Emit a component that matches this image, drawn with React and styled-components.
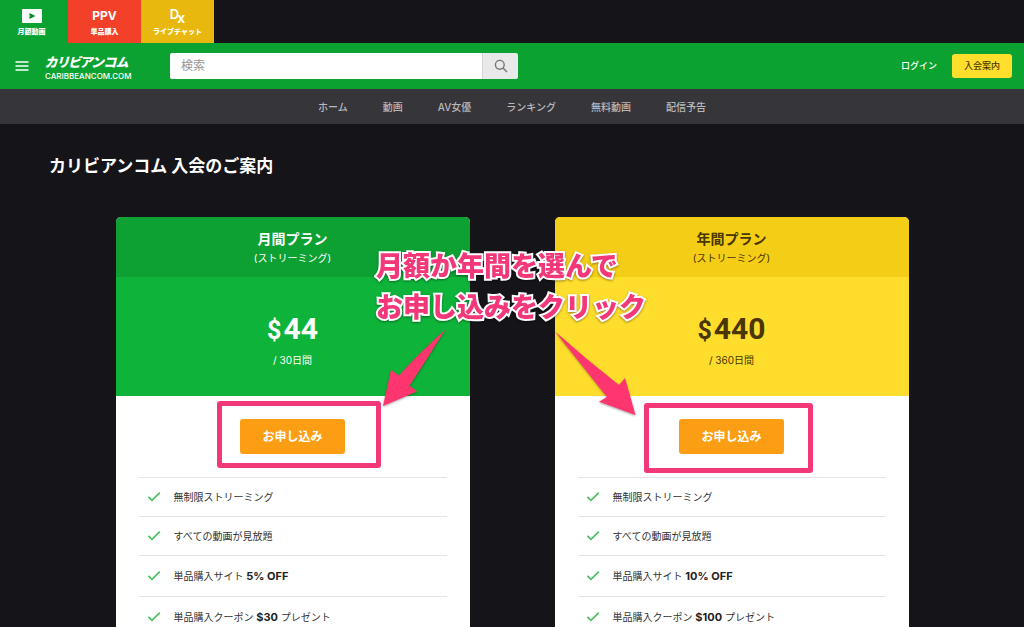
import React from "react";
import styled, { createGlobalStyle, css } from "styled-components";

const GlobalStyle = createGlobalStyle`
  *, *::before, *::after { box-sizing: border-box; }
  html { scrollbar-width: none; background: #141419; }
  body {
    margin: 0;
    background: #141419;
    color: #fff;
    font-family: Inter, "Noto Sans CJK JP", sans-serif;
    font-size: 10px;
    line-height: 16px;
  }
  h1, h2, p, ul { margin: 0; padding: 0; }
  a { color: inherit; text-decoration: none; }
  button, input { font: inherit; }
`;

const Page = styled.div`
  min-height: 100vh;
  overflow: hidden;
`;

const SiteTabs = styled.nav`
  display: flex;
  height: 43px;
`;

const SiteTab = styled.a`
  display: flex;
  flex-direction: column;
  align-items: center;
  width: ${(p) => p.$width || 73}px;
  padding: ${(p) => (p.$width ? "7px 5px 0 0" : "7px 0 0")};
  background: ${(p) => p.$color};
  font-size: 7px;
  font-weight: 900;
`;

const TabMark = styled.span`
  display: flex;
  align-items: center;
  justify-content: center;
  height: 17px;
  font-size: 12px;
  font-weight: 700;
`;

const DxMark = styled(TabMark)`
  align-items: flex-start;
  font-size: 13px;
  line-height: 15px;
  font-weight: 600;
  small {
    margin-left: -2px;
    padding-top: 3px;
    font-size: 14px;
  }
`;

const Header = styled.header`
  display: flex;
  align-items: center;
  height: 46px;
  padding: 0 12px 0 15px;
  background: #0ba232;
`;

const MenuButton = styled.button`
  display: flex;
  padding: 0;
  border: 0;
  background: none;
  color: #fff;
  cursor: pointer;
`;

const Logo = styled.a`
  display: flex;
  flex-direction: column;
  width: 125px;
  margin-left: 16px;
  white-space: nowrap;
`;

const LogoName = styled.span`
  font-family: "Noto Sans CJK JP", sans-serif;
  font-size: 13px;
  line-height: 20px;
  font-weight: 900;
  font-style: italic;
  font-feature-settings: "palt";
`;

const LogoDomain = styled.span`
  font-size: 8px;
  line-height: 8px;
  font-weight: 500;
`;

const Search = styled.form`
  display: flex;
  flex: 0 1 348px;
  height: 26px;
  border-radius: 2px;
  overflow: hidden;
`;

const SearchInput = styled.input`
  flex: 1;
  min-width: 0;
  padding: 0 11px;
  border: 0;
  background: #fff;
  color: #333;
  font-size: 12px;
  &::placeholder { color: #969696; }
`;

const SearchButton = styled.button`
  display: flex;
  align-items: center;
  justify-content: center;
  width: 36px;
  padding: 0;
  border: 0;
  border-left: 1px solid #d4d4d4;
  background: #e9e9e9;
  color: #777;
  cursor: pointer;
`;

const Account = styled.div`
  display: flex;
  align-items: center;
  gap: 15px;
  margin-left: auto;
  font-size: 9px;
  font-weight: 500;
`;

const JoinLink = styled.a`
  padding: 4px 12px;
  border-radius: 3px;
  background: #ffdf2c;
  color: #4a3800;
`;

const MainNav = styled.nav`
  display: flex;
  align-items: center;
  justify-content: center;
  gap: 35px;
  height: 35px;
  background: #36353a;
  color: #b9b8bc;
  font-weight: 500;
`;

const Title = styled.h1`
  padding: 30px 49px 0;
  font-size: 17px;
  line-height: 24px;
  font-weight: 700;
`;

const Plans = styled.section`
  position: relative;
  display: grid;
  grid-template-columns: 1fr 1fr;
  gap: 85px;
  max-width: 793px;
  margin: 39px auto 0;
`;

const themes = {
  green: { head: "#0da032", body: "#0db439", text: "#fff" },
  yellow: { head: "#f4cd16", body: "#ffdd2c", text: "#493600" },
};

const Card = styled.article`
  border-radius: 5px 5px 0 0;
  background: #fff;
  color: #333;
`;

const CardHead = styled.header`
  height: 60px;
  padding-top: 12px;
  border-radius: 5px 5px 0 0;
  background: ${(p) => themes[p.$tone].head};
  color: ${(p) => themes[p.$tone].text};
  text-align: center;
`;

const PlanName = styled.h2`
  margin-bottom: 1px;
  font-size: 14px;
  line-height: 20px;
  font-weight: 700;
`;

const PriceArea = styled.div`
  height: 119px;
  padding-top: 34px;
  background: ${(p) => themes[p.$tone].body};
  color: ${(p) => themes[p.$tone].text};
  text-align: center;
`;

const Price = styled.p`
  margin-bottom: 3px;
  font-family: Roboto, sans-serif;
  font-size: 30px;
  line-height: 36px;
  font-weight: 700;
`;

const Currency = styled.span`
  margin-right: 2px;
  font-size: 25px;
`;

const Apply = styled.div`
  position: relative;
  display: flex;
  justify-content: center;
  padding: 23px 0;
`;

const ApplyButton = styled.button`
  width: 105px;
  height: 35px;
  padding: 0;
  border: 0;
  border-radius: 3px;
  background: #fc9e14;
  color: #fff;
  font-size: 12px;
  font-weight: 700;
  cursor: pointer;
`;

const Highlight = styled.span`
  position: absolute;
  border: 5px solid #f23878;
  border-radius: 3px;
  pointer-events: none;
  ${(p) =>
    p.$tone === "green"
      ? css`top: 5px; left: 101px; width: 164px; height: 67px;`
      : css`top: 7px; left: 89px; width: 169px; height: 70px;`}
`;

const Features = styled.ul`
  padding: 0 23px;
  list-style: none;
`;

const Feature = styled.li`
  display: flex;
  align-items: center;
  gap: 13px;
  min-height: ${(p) => (p.$tall ? 41 : 39)}px;
  padding-left: 8px;
  border-top: 1px solid #e4e4e4;
  strong {
    font-size: 11px;
    font-weight: 700;
    color: #222;
  }
`;

const Note = styled.p`
  position: absolute;
  top: 27px;
  left: calc(50% - 136px);
  color: #f23878;
  font-family: "Noto Sans CJK JP", sans-serif;
  font-size: 27px;
  line-height: 41px;
  font-weight: 900;
  white-space: nowrap;
  -webkit-text-stroke: 4px #fff;
  paint-order: stroke fill;
  filter: drop-shadow(0 1px 1px rgba(0, 0, 0, 0.4));
`;

const Arrows = styled.svg`
  position: absolute;
  top: 108px;
  left: calc(50% - 137px);
  filter: drop-shadow(0 1px 1px rgba(0, 0, 0, 0.35));
  pointer-events: none;
`;

const CheckIcon = () => (
  <svg width="14" height="12" viewBox="0 0 14 12" fill="none" stroke="#4cc065" strokeWidth="1.7" aria-hidden="true">
    <path d="M1.4 5.8 5 9.4 12.8 1.6" />
  </svg>
);

const navItems = ["ホーム", "動画", "AV女優", "ランキング", "無料動画", "配信予告"];

const plans = [
  { tone: "green", name: "月間プラン", price: "44", days: "/ 30日間", off: "5% OFF", coupon: "$30" },
  { tone: "yellow", name: "年間プラン", price: "440", days: "/ 360日間", off: "10% OFF", coupon: "$100" },
];

function PlanCard({ plan }) {
  return (
    <Card>
      <CardHead $tone={plan.tone}>
        <PlanName>{plan.name}</PlanName>
        <p>(ストリーミング)</p>
      </CardHead>
      <PriceArea $tone={plan.tone}>
        <Price>
          <Currency>$</Currency>
          {plan.price}
        </Price>
        <p>{plan.days}</p>
      </PriceArea>
      <Apply>
        <ApplyButton type="button">お申し込み</ApplyButton>
        <Highlight $tone={plan.tone} />
      </Apply>
      <Features>
        <Feature><CheckIcon /><span>無制限ストリーミング</span></Feature>
        <Feature><CheckIcon /><span>すべての動画が見放題</span></Feature>
        <Feature $tall><CheckIcon /><span>単品購入サイト <strong>{plan.off}</strong></span></Feature>
        <Feature $tall><CheckIcon /><span>単品購入クーポン <strong>{plan.coupon}</strong> プレゼント</span></Feature>
      </Features>
    </Card>
  );
}

export default function App() {
  return (
    <Page>
      <GlobalStyle />
      <SiteTabs>
        <SiteTab href="#" $color="#0ba232" $width={68}>
          <TabMark>
            <svg width="20" height="14" viewBox="0 0 20 14" aria-hidden="true">
              <rect width="20" height="14" rx="1" fill="#fff" />
              <path d="M7.5 4v6l6-3z" fill="#0a8a2c" />
            </svg>
          </TabMark>
          月額動画
        </SiteTab>
        <SiteTab href="#" $color="#f24128">
          <TabMark>PPV</TabMark>
          単品購入
        </SiteTab>
        <SiteTab href="#" $color="#e8b80f">
          <DxMark>D<small>x</small></DxMark>
          ライブチャット
        </SiteTab>
      </SiteTabs>
      <Header>
        <MenuButton type="button" aria-label="メニュー">
          <svg width="14" height="12" viewBox="0 0 14 12" stroke="currentColor" strokeWidth="1.6" aria-hidden="true">
            <path d="M0.5 2h13M0.5 6h13M0.5 10h13" />
          </svg>
        </MenuButton>
        <Logo href="#">
          <LogoName>カリビアンコム</LogoName>
          <LogoDomain>CARIBBEANCOM.COM</LogoDomain>
        </Logo>
        <Search role="search" onSubmit={(e) => e.preventDefault()}>
          <SearchInput type="text" placeholder="検索" aria-label="検索" />
          <SearchButton type="submit" aria-label="検索">
            <svg width="14" height="14" viewBox="0 0 14 14" fill="none" stroke="currentColor" strokeWidth="1.4" aria-hidden="true">
              <circle cx="5.8" cy="5.8" r="4.4" />
              <path d="m9 9 4 4" />
            </svg>
          </SearchButton>
        </Search>
        <Account>
          <a href="#">ログイン</a>
          <JoinLink href="#">入会案内</JoinLink>
        </Account>
      </Header>
      <MainNav>
        {navItems.map((item) => (
          <a key={item} href="#">{item}</a>
        ))}
      </MainNav>
      <main>
        <Title>カリビアンコム 入会のご案内</Title>
        <Plans>
          {plans.map((plan) => (
            <PlanCard key={plan.tone} plan={plan} />
          ))}
          <Arrows width="270" height="96" viewBox="0 0 270 96" fill="#ff356f" aria-hidden="true">
            <path d="M70.5 4.5Q44 28 24 50.5L16 44.7 8 81 42 66.5 34.5 60.5Q45 45 70.5 4.5Z" />
            <path d="M180 6.500Q205 38 232 72L224 76.700 260.500 90 250 53 244 60Q212 35 180 6.500Z" />
          </Arrows>
          <Note>
            月額か年間を選んで
            <br />
            お申し込みをクリック
          </Note>
        </Plans>
      </main>
    </Page>
  );
}
